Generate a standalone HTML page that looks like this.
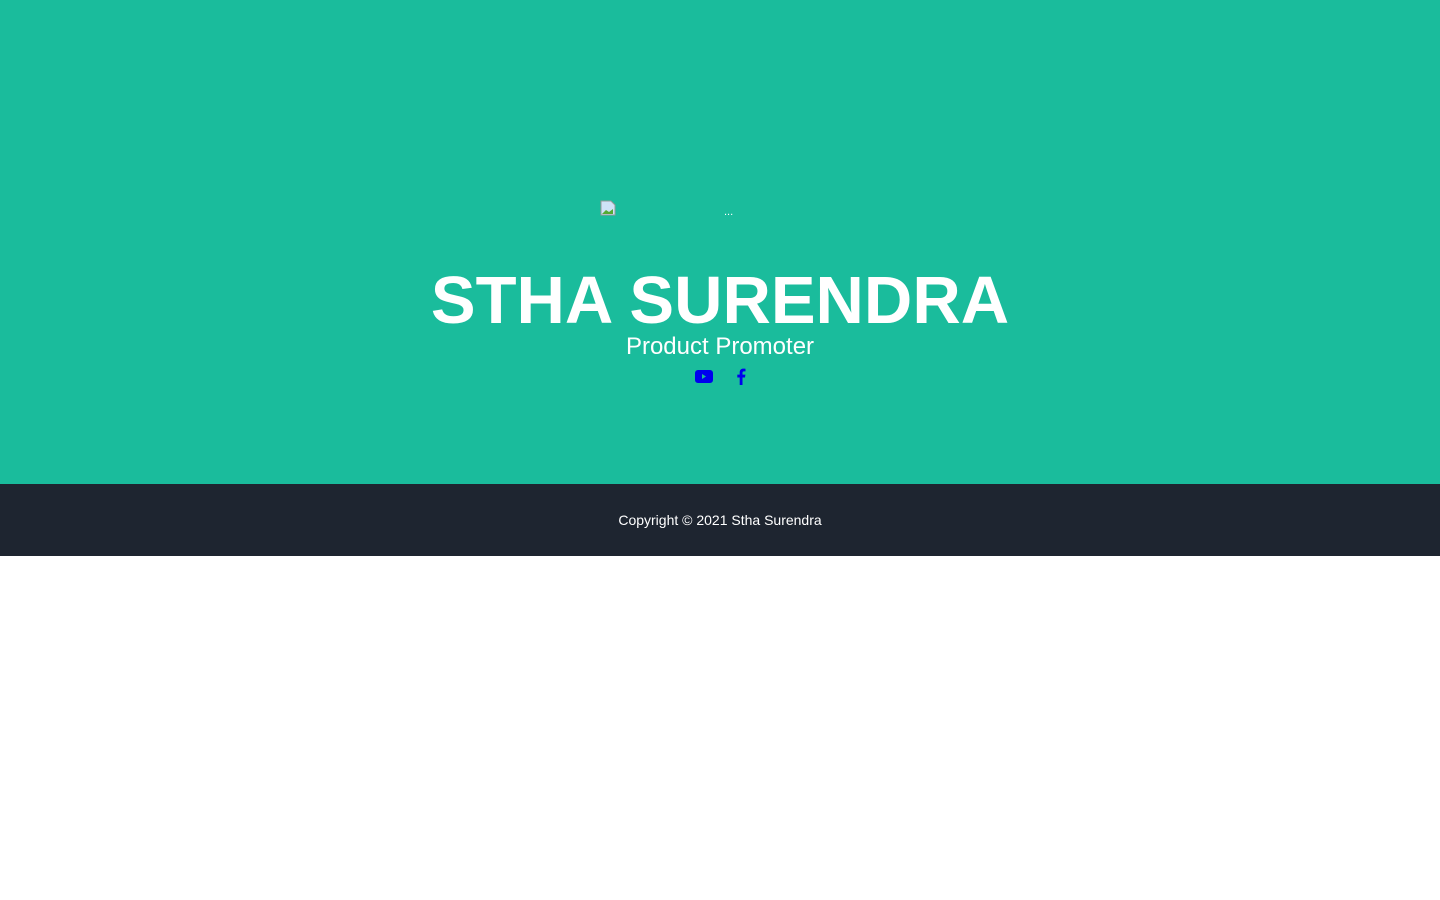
<!DOCTYPE html>
<html><head><style>
body{margin:0;font-family:"Liberation Sans",sans-serif;background:#fff}
.hero{background:#1abc9c;height:484px;position:relative;color:#fff;text-align:center}
.img{position:absolute;left:600px;top:200px;width:16px;height:16px}
.dots{position:absolute;left:724px;top:206px;font-size:11px;color:#fff}
h1{position:absolute;left:0;right:0;top:263px;margin:0;font-size:67px;font-weight:bold;line-height:76px}
.sub{position:absolute;left:0;right:0;top:332px;font-size:24px;line-height:30px}
.icons{position:absolute;top:368px;left:0;right:0}
footer{background:#1e2530;height:72px;color:#fff;text-align:center;font-size:14px;line-height:72px}
</style></head><body>
<div class="hero">
<svg class="img" viewBox="0 0 16 16"><path d="M1 1h10l4 4v10H1z" fill="#cfe3f7" stroke="#999"/><path d="M2 14l4-4 3 2 4-3v5H2z" fill="#5a3"/></svg>
<div class="dots">...</div>
<h1>STHA SURENDRA</h1>
<div class="sub">Product Promoter</div>
<div class="icons">
<svg style="position:absolute;left:695px;top:2px" width="18" height="13" viewBox="0 0 18 13"><rect width="18" height="13" rx="3" fill="#0000ee"/><path d="M7 4v5l4-2.5z" fill="#1abc9c"/></svg>
<svg style="position:absolute;left:736px;top:0" width="10" height="17" viewBox="0 0 10 17"><path d="M6.5 17V9.5H9L9.4 6.6H6.5V4.8c0-.8.3-1.4 1.5-1.4h1.5V.8C9.2.7 8.3.6 7.3.6 5.2.6 3.7 1.9 3.7 4.3v2.3H1.3v2.9h2.4V17z" fill="#0000ee"/></svg>
</div>
</div>
<footer>Copyright © 2021 Stha Surendra</footer>
</body></html>
